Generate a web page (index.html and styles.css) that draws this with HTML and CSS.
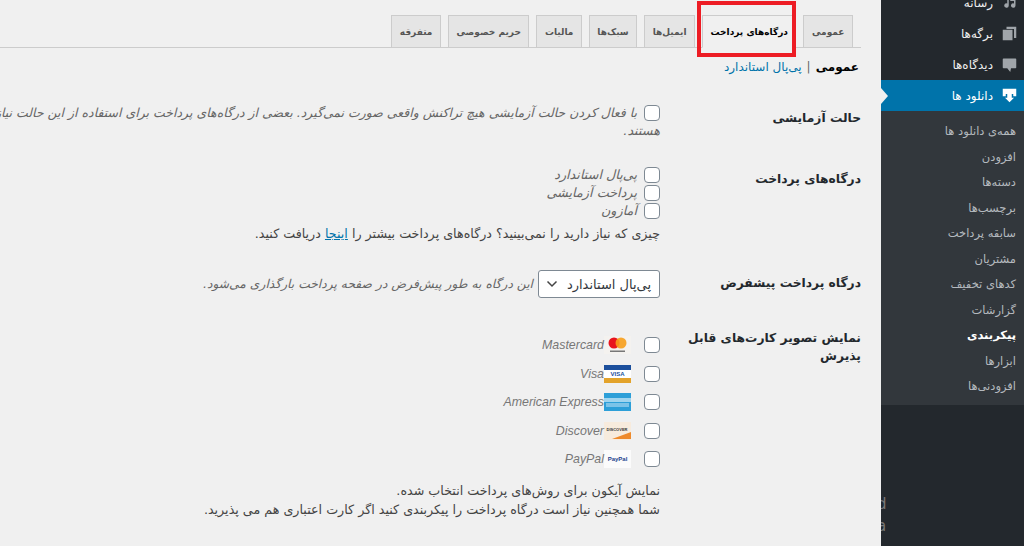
FILE: index.html
```html
<!DOCTYPE html>
<html lang="fa" dir="rtl">
<head>
    <meta charset="UTF-8">
    <title>پیکربندی دانلودها</title>
    <link rel="stylesheet" href="styles.css">
</head>
<body>
    <aside class="sidebar">
        <ul class="menu">
            <li class="menu-item"><svg class="menu-icon" viewBox="0 0 20 20"><path d="M2 3h7v11a3 3 0 1 1-2-2.800V6H2zM11 2h3l4 4v8a3 3 0 1 1-2-2.800V8h-5z"/></svg>رسانه</li>
            <li class="menu-item"><svg class="menu-icon" viewBox="0 0 20 20"><path d="M6 1h13v15h-3V4H6zM1 5h13v14H1z"/></svg>برگه‌ها</li>
            <li class="menu-item"><svg class="menu-icon" viewBox="0 0 20 20"><path d="M2 2h16a1 1 0 0 1 1 1v11a1 1 0 0 1-1 1h-6l-1 5-4-5H2a1 1 0 0 1-1-1V3a1 1 0 0 1 1-1z"/></svg>دیدگاه‌ها</li>
            <li class="menu-item active"><svg class="menu-icon" viewBox="0 0 20 20"><path d="M1 1h18v10h-4V8H5v3H1zM7 8h6v5h3l-6 6-6-6h3z"/></svg>دانلود ها</li>
        </ul>
        <ul class="submenu">
            <li>همه‌ی دانلود ها</li>
            <li>افزودن</li>
            <li>دسته‌ها</li>
            <li>برچسب‌ها</li>
            <li>سابقه پرداخت</li>
            <li>مشتریان</li>
            <li>کدهای تخفیف</li>
            <li>گزارشات</li>
            <li class="current">پیکربندی</li>
            <li>ابزارها</li>
            <li>افزودنی‌ها</li>
        </ul>
        <span class="cut-letter cut-d">d</span>
        <span class="cut-letter cut-a">a</span>
    </aside>

    <main class="content">
        <nav class="tabs">
            <a class="tab">عمومی</a>
            <a class="tab tab-active">درگاه‌های پرداخت</a>
            <a class="tab">ایمیل‌ها</a>
            <a class="tab">سبک‌ها</a>
            <a class="tab">مالیات</a>
            <a class="tab">حریم خصوصی</a>
            <a class="tab">متفرقه</a>
        </nav>
        <div class="highlight"></div>

        <div class="subnav"><strong>عمومی</strong><span class="sep">|</span><a>پی‌پال استاندارد</a></div>

        <section class="row row-test">
            <h3 class="row-label">حالت آزمایشی</h3>
            <div class="row-body">
                <div class="check-line">
                    <input type="checkbox" class="check">
                    <em class="desc nowrap">با فعال کردن حالت آزمایشی هیچ تراکنش واقعی صورت نمی‌گیرد. بعضی از درگاه‌های پرداخت برای استفاده از این حالت نیاز به حساب آزمایشی دارند</em>
                </div>
                <em class="desc desc-second">هستند.</em>
            </div>
        </section>

        <section class="row row-gateways">
            <h3 class="row-label">درگاه‌های پرداخت</h3>
            <div class="row-body">
                <label class="gateway"><input type="checkbox" class="check"><em class="desc">پی‌پال استاندارد</em></label>
                <label class="gateway"><input type="checkbox" class="check"><em class="desc">پرداخت آزمایشی</em></label>
                <label class="gateway"><input type="checkbox" class="check"><em class="desc">آمازون</em></label>
                <p class="more">چیزی که نیاز دارید را نمی‌بینید؟ درگاه‌های پرداخت بیشتر را <a>اینجا</a> دریافت کنید.</p>
            </div>
        </section>

        <section class="row row-default">
            <h3 class="row-label">درگاه پرداخت پیشفرض</h3>
            <div class="row-body select-line">
                <div class="select">پی‌پال استاندارد<svg class="chevron" viewBox="0 0 12 8"><path d="M1.500 1.500 6 6l4.500-4.500" fill="none" stroke="#444" stroke-width="1.500"/></svg></div>
                <em class="desc desc-select">این درگاه به طور پیش‌فرض در صفحه پرداخت بارگذاری می‌شود.</em>
            </div>
        </section>

        <section class="row row-cards">
            <h3 class="row-label">نمایش تصویر کارت‌های قابل پذیرش</h3>
            <div class="row-body">
                <label class="card-line">
                    <input type="checkbox" class="check">
                    <svg class="card" viewBox="0 0 27 18"><rect width="27" height="18" fill="#f4f2ef"/><circle cx="10" cy="7" r="5.500" fill="#e8141e"/><circle cx="17" cy="7" r="5.500" fill="#f79e1b" opacity=".9"/><rect x="6" y="14.500" width="15" height="1.500" fill="#777"/></svg>
                    <em class="card-name">Mastercard</em>
                </label>
                <label class="card-line">
                    <input type="checkbox" class="check">
                    <svg class="card" viewBox="0 0 27 18"><rect width="27" height="18" fill="#fff"/><rect width="27" height="5" fill="#1c4f9c"/><rect y="13" width="27" height="5" fill="#e3a32b"/><text x="13.500" y="11.300" class="card-text" fill="#1c4f9c">VISA</text></svg>
                    <em class="card-name">Visa</em>
                </label>
                <label class="card-line">
                    <input type="checkbox" class="check">
                    <svg class="card" viewBox="0 0 27 18"><rect width="27" height="18" fill="#2d9fd8"/><rect y="5" width="27" height="4" fill="#9fd4ee"/><rect x="2" y="10" width="23" height="4" fill="#7cc3e8"/></svg>
                    <em class="card-name">American Express</em>
                </label>
                <label class="card-line">
                    <input type="checkbox" class="check">
                    <svg class="card" viewBox="0 0 27 18"><rect width="27" height="18" fill="#f7ebdd"/><path d="M27 10v7H8z" fill="#ee8a2c"/><text x="13" y="9" class="card-text card-text-small" fill="#333">DISCOVER</text></svg>
                    <em class="card-name">Discover</em>
                </label>
                <label class="card-line">
                    <input type="checkbox" class="check">
                    <svg class="card" viewBox="0 0 27 18"><rect width="27" height="18" fill="#fbfbfb"/><text x="13.500" y="11" class="card-text" fill="#27458f">PayPal</text></svg>
                    <em class="card-name">PayPal</em>
                </label>
                <p class="note">نمایش آیکون برای روش‌های پرداخت انتخاب شده.</p>
                <p class="note">شما همچنین نیاز است درگاه پرداخت را پیکربندی کنید اگر کارت اعتباری هم می پذیرید.</p>
            </div>
        </section>
    </main>
</body>
</html>
```

FILE: styles.css
```css
* {
    box-sizing: border-box;
}
html, body {
    height: 546px;
    overflow: hidden;
}
body {
    margin: 0;
    display: flex;
    background-color: #f0f0f0;
    color: #444;
    font-family: 'DejaVu Sans', sans-serif;
    font-size: 12px;
}
.sidebar {
    position: relative;
    width: 143px;
    flex: none;
    background-color: #23282d;
    color: #eee;
    overflow: hidden;
}
.menu, .submenu {
    list-style: none;
    margin: 0;
    padding: 0;
}
.menu {
    margin-top: -13px;
}
.menu-item {
    height: 31px;
    display: flex;
    align-items: center;
    gap: 9px;
    padding-right: 7px;
    font-size: 12px;
}
.menu-icon {
    width: 15px;
    height: 15px;
    fill: #a0a5aa;
}
.active {
    position: relative;
    background-color: #0073aa;
    color: #fff;
}
.active .menu-icon {
    fill: #fff;
}
.active::after {
    content: "";
    position: absolute;
    left: 0;
    top: 8px;
    border-style: solid;
    border-width: 8px 0 8px 7px;
    border-color: transparent transparent transparent #f0f0f0;
}
.submenu {
    background-color: #32373c;
    padding: 8px 0 0;
    height: 294px;
}
.submenu li {
    height: 25.500px;
    line-height: 25px;
    padding-right: 8px;
    color: #b4b9be;
    font-size: 11.5px;
}
.submenu .current {
    color: #fff;
    font-weight: bold;
}
.cut-letter {
    position: absolute;
    left: -4px;
    color: #777;
    font-size: 15px;
}
.cut-d {
    top: 495px;
}
.cut-a {
    top: 517px;
}

.content {
    position: relative;
    flex: 1;
    min-width: 0;
    padding-top: 15px;
    overflow: hidden;
}
.tabs {
    display: flex;
    gap: 7px;
    height: 33px;
    margin-right: 28px;
    position: relative;
}
.tabs::after {
    content: "";
    position: absolute;
    left: -400px;
    right: -8px;
    bottom: 0;
    border-bottom: 1px solid #ccc;
}
.tab {
    height: 33px;
    padding: 0 7.500px;
    display: flex;
    align-items: center;
    background-color: #e5e5e5;
    border: 1px solid #ccc;
    color: #555;
    font-size: 9px;
    font-weight: bold;
    white-space: nowrap;
}
.tab-active {
    background-color: #f0f0f0;
    border-bottom-color: #f0f0f0;
    color: #000;
    position: relative;
    z-index: 1;
}
.highlight {
    position: absolute;
    left: 697px;
    top: 1px;
    width: 99px;
    height: 56px;
    border: 4px solid #ed1c24;
    z-index: 2;
}
.subnav {
    margin: 9px 22px 0 0;
    height: 20px;
    line-height: 20px;
    font-size: 12px;
    color: #666;
}
.subnav strong {
    color: #000;
}
.subnav .sep {
    margin: 0 5px;
}
.subnav a, .more a {
    color: #0073aa;
}
.more a {
    text-decoration: underline;
}

.row {
    display: flex;
}
.row-label {
    flex: none;
    width: 221px;
    margin: 0;
    padding: 0 20px 0 28px;
    color: #23282d;
    font-size: 12.300px;
    font-weight: bold;
    line-height: 18px;
}
.row-body {
    flex: 1;
    min-width: 0;
}
.check {
    appearance: none;
    flex: none;
    width: 16px;
    height: 16px;
    margin: 0;
    background-color: #fff;
    border: 1px solid #7e8993;
    border-radius: 4px;
}
.desc {
    color: #666;
    font-size: 12.800px;
    font-style: italic;
    line-height: 18px;
}
.nowrap {
    white-space: nowrap;
    font-size: 12.500px;
}
.row-test {
    padding-top: 27px;
}
.row-test .row-label {
    padding-top: 5px;
}
.check-line {
    display: flex;
    align-items: center;
    gap: 7px;
}
.desc-second {
    display: block;
}
.row-gateways {
    padding-top: 26px;
}
.row-gateways .row-label {
    padding-top: 4px;
}
.gateway {
    display: flex;
    align-items: center;
    gap: 7px;
    height: 18px;
}
.more {
    margin: 5px 0 0;
    line-height: 18px;
    font-size: 12.700px;
    white-space: nowrap;
}
.row-default {
    padding-top: 27px;
}
.row-default .row-label {
    padding-top: 4px;
}
.select-line {
    display: flex;
    align-items: center;
    gap: 5px;
}
.desc-select {
    font-size: 12.300px;
}
.select {
    flex: none;
    width: 122px;
    height: 28px;
    display: flex;
    align-items: center;
    justify-content: space-between;
    padding: 0 8px 0 7px;
    background-color: #fff;
    border: 1px solid #7e8993;
    border-radius: 3px;
    color: #32373c;
    font-size: 13px;
}
.chevron {
    width: 12px;
    height: 8px;
}
.row-cards {
    padding-top: 33px;
}
.row-cards .row-label {
    margin-top: -2px;
}
.card-line {
    display: flex;
    align-items: center;
    height: 28.500px;
}
.card {
    width: 27px;
    height: 18px;
    margin-right: 13px;
    flex: none;
}
.card-text {
    font-family: 'Liberation Sans', sans-serif;
    font-size: 6px;
    font-weight: bold;
    text-anchor: middle;
}
.card-text-small {
    font-size: 4px;
}
.card-name {
    font-family: 'Liberation Sans', sans-serif;
    font-size: 12.400px;
    color: #777;
}
.note {
    margin: 0;
    line-height: 19px;
    font-size: 12.700px;
    white-space: nowrap;
}
.card-line + .note {
    margin-top: 7px;
}
```
